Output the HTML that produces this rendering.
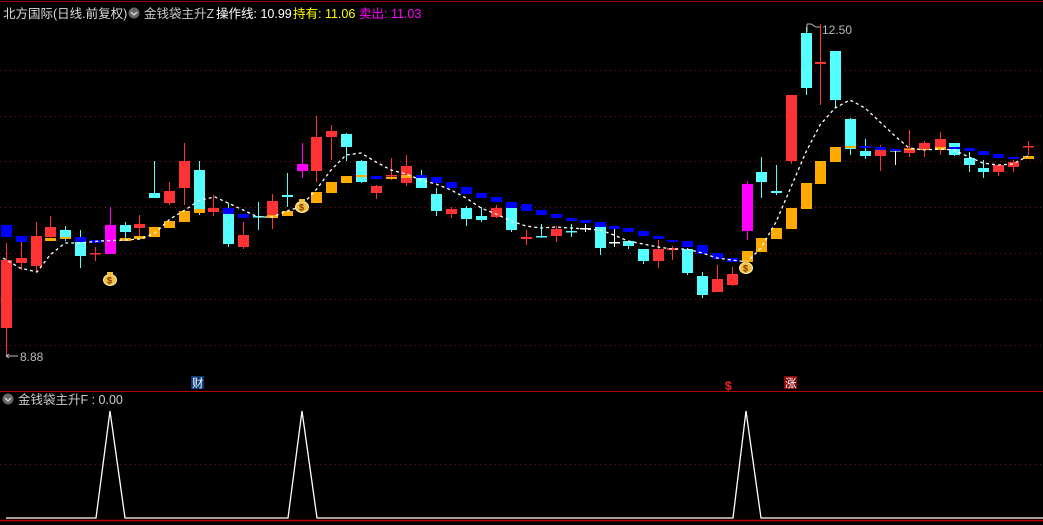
<!DOCTYPE html>
<html><head><meta charset="utf-8"><style>
html,body{margin:0;padding:0;background:#000;width:1043px;height:525px;overflow:hidden}
svg{display:block}
text{font-family:"Liberation Sans","Noto Sans CJK SC",sans-serif}
</style></head><body>
<svg id="s" width="1043" height="525" viewBox="0 0 1043 525" xmlns="http://www.w3.org/2000/svg">
<rect width="1043" height="525" fill="#000"/>
<line x1="0" y1="1.5" x2="1043" y2="1.5" stroke="#a00000" stroke-width="1"/>
<g id="grid" stroke="#8a1010" stroke-width="1" stroke-dasharray="1,4">
<line x1="0" y1="70.5" x2="1043" y2="70.5"/><line x1="0" y1="116.5" x2="1043" y2="116.5"/>
<line x1="0" y1="161.5" x2="1043" y2="161.5"/><line x1="0" y1="207.5" x2="1043" y2="207.5"/>
<line x1="0" y1="253.5" x2="1043" y2="253.5"/><line x1="0" y1="299.5" x2="1043" y2="299.5"/>
<line x1="0" y1="345.5" x2="1043" y2="345.5"/><line x1="0" y1="464.5" x2="1043" y2="464.5"/>
</g>
<g id="c"></g>
<polyline id="ma" fill="none" stroke="#fff" stroke-width="1.3" stroke-dasharray="3,3"/>
<g id="bags"></g>
<text x="3" y="18" font-size="12.5" fill="#ddd">北方国际(日线.前复权)</text>
<circle cx="134" cy="13" r="5.5" fill="#666"/><path d="M131 12l3 3 3-3" stroke="#ddd" stroke-width="1.3" fill="none"/>
<text x="144" y="18" font-size="12.5" fill="#ccc">金钱袋主升Z</text>
<text x="216" y="18" font-size="12.5" fill="#fff">操作线: 10.99</text>
<text x="293" y="18" font-size="12.5" fill="#ffff00">持有: 11.06</text>
<text x="359" y="18" font-size="12.5" fill="#ff00ff">卖出: 11.03</text>
<text x="822" y="34" font-size="12" fill="#bbb">12.50</text>
<path d="M807 24v8M807 24h4l5 3h4" stroke="#bbb" fill="none"/>
<path d="M6 356h12M6 356l3-2M6 356l3 2" stroke="#bbb" fill="none"/>
<text x="20" y="361" font-size="12" fill="#bbb">8.88</text>
<rect x="191" y="376" width="13" height="13" fill="#0a3a7a"/>
<text x="192" y="387" font-size="11.5" fill="#fff">财</text>
<text x="725" y="390" font-size="12" fill="#ff2020" font-weight="bold">$</text>
<rect x="784" y="376" width="13" height="13" fill="#8a0a0a"/>
<text x="785" y="387" font-size="11.5" fill="#fff">涨</text>
<line x1="0" y1="391.5" x2="1043" y2="391.5" stroke="#b00000"/>
<circle cx="8" cy="399" r="5.5" fill="#666"/><path d="M5 398l3 3 3-3" stroke="#ddd" stroke-width="1.3" fill="none"/>
<text x="18" y="404" font-size="12.5" fill="#ccc">金钱袋主升F : 0.00</text>
<polyline points="6,518 96,518 110,411 125,518 288,518 302,411 317,518 733,518 746,411 761,518 1043,518" fill="none" stroke="#fff" stroke-width="1.3"/>
<line x1="0" y1="520.5" x2="1043" y2="520.5" stroke="#c00000" stroke-width="1.5"/>
</svg>
<script>
var C={r:"#ff3333",c:"#55ffff",m:"#ff00ff",w:"#ffffff",b:"#0000ff",o:"#ffaa00"};
// [x, color, bodyTop, bodyBot, wickTop, wickBot, band(color,top,bot) ...]
var d=[
[6,"r",260,328,243,356,"b",225,237],
[21,"r",258,263,242,270,"b",236,242],
[36,"r",236,266,222,272],
[50,"r",227,237,216,238,"o",238,241],
[65,"c",230,238,226,241,"o",237,239],
[80,"c",238,256,230,268,"b",237,242],
[95,"r",253,254,247,261,"b",240,243],
[110,"m",225,254,207,254],
[125,"c",225,232,222,241,"o",238,241],
[139,"r",224,228,215,236,"o",236,239],
[154,"c",193,198,161,198,"o",227,237],
[169,"r",191,203,182,205,"o",221,228],
[184,"r",161,188,143,205,"o",211,222],
[199,"c",170,213,161,215,"o",209,213],
[213,"r",208,212,195,216],
[228,"c",214,244,203,247,"b",208,214],
[243,"r",235,247,222,249,"b",214,218],
[258,"c",216,217,202,230],
[272,"r",201,216,194,229,"o",215,218],
[287,"c",195,197,173,207,"o",211,216],
[302,"m",164,171,143,178],
[316,"r",137,171,116,182,"o",192,203],
[331,"r",131,137,125,160,"o",182,193],
[346,"c",134,147,133,161,"o",176,183],
[361,"c",161,182,160,183,"o",175,177],
[376,"r",186,193,185,199,"b",176,179],
[391,"r",175,176,158,180,"o",177,179],
[406,"r",166,183,155,186,"o",175,178],
[421,"c",178,188,170,188,"b",175,178],
[436,"c",194,211,188,216,"b",177,183],
[451,"r",209,214,207,218,"b",182,188],
[466,"c",208,219,206,226,"b",187,194],
[481,"c",216,220,207,222,"b",193,198],
[496,"r",208,217,205,218,"b",197,202],
[511,"c",208,230,208,232,"b",202,208],
[526,"r",237,239,230,245,"b",204,211],
[541,"c",236,237,224,238,"b",210,215],
[556,"r",229,236,226,242,"b",214,218],
[571,"c",231,232,224,237,"b",218,221],
[585,"w",228,229,224,232,"b",220,223],
[600,"c",227,248,227,255,"b",222,227],
[614,"w",242,243,229,247,"b",226,229],
[628,"c",241,246,241,249,"b",228,232],
[643,"c",249,261,249,264,"b",231,236],
[658,"r",249,261,240,268,"b",236,239],
[672,"r",248,250,246,260,"b",240,242],
[687,"c",249,273,248,275,"b",241,247],
[702,"c",276,295,272,298,"b",245,254],
[717,"r",279,292,265,292,"b",253,259],
[732,"r",274,285,267,286,"b",258,262],
[747,"m",184,231,181,240,"o",251,262],
[761,"c",172,182,157,198,"o",238,252],
[776,"c",191,193,165,195,"o",228,239],
[791,"r",95,161,95,164,"o",208,229],
[806,"c",33,88,27,95,"o",183,209],
[820,"r",62,64,24,105,"o",161,184],
[835,"c",51,100,51,108,"o",147,162],
[850,"c",119,149,118,155,"o",146,148],
[865,"c",151,156,139,159,"b",146,148],
[880,"r",148,156,145,171,"b",147,150],
[895,"w",150,151,149,165,"b",149,151],
[909,"r",148,153,130,157,"o",149,150],
[924,"r",143,149,141,157,"o",149,150],
[940,"r",139,149,132,155,"o",147,150],
[954,"c",143,155,143,156,"b",147,149],
[969,"c",158,165,152,172,"b",148,151],
[983,"c",168,172,160,178,"b",151,155],
[998,"r",165,172,165,176,"b",154,158],
[1013,"r",162,167,160,172,"b",157,159],
[1028,"r",146,147,141,155,"o",156,159]];
var h="";
d.forEach(function(a){var x=a[0],col=C[a[1]];
h+='<line x1="'+(x+.5)+'" y1="'+a[4]+'" x2="'+(x+.5)+'" y2="'+a[5]+'" stroke="'+col+'"/>';
h+='<rect x="'+(x-5)+'" y="'+a[2]+'" width="11" height="'+Math.max(1.5,a[3]-a[2])+'" fill="'+col+'"/>';
for(var i=6;i<a.length;i+=3)h+='<rect x="'+(x-5)+'" y="'+a[i+1]+'" width="11" height="'+(a[i+2]-a[i+1])+'" fill="'+C[a[i]]+'"/>';});
document.getElementById("c").innerHTML=h;
var ma=[[3,258],[20,268],[37,272],[50,255],[65,243],[80,243],[100,241],[125,240],[140,239],[155,233],[170,219],[185,210],[200,200],[215,197],[228,203],[243,210],[258,217],[272,217],[287,211],[300,207],[316,190],[331,170],[346,155],[361,153],[376,162],[391,170],[406,174],[421,180],[436,184],[451,190],[466,198],[481,208],[496,214],[511,221],[526,226],[541,228],[556,227],[571,228],[585,229],[600,230],[614,235],[628,241],[643,244],[658,247],[672,249],[687,249],[702,253],[717,258],[732,260],[747,262],[761,248],[776,222],[791,187],[806,152],[820,125],[835,108],[850,100],[865,108],[880,122],[895,136],[909,148],[924,150],[940,149],[954,150],[969,157],[983,163],[998,165],[1013,164],[1028,156]];
document.getElementById("ma").setAttribute("points",ma.map(function(p){return p.join(",")}).join(" "));
var b="";[[110,279],[302,206],[746,267]].forEach(function(p){
b+='<ellipse cx="'+p[0]+'" cy="'+(p[1]+1)+'" rx="6.5" ry="5.5" fill="#f0c040" stroke="#fff3b0"/><rect x="'+(p[0]-3)+'" y="'+(p[1]-7)+'" width="6" height="3" fill="#f0c040"/><text x="'+(p[0]-3)+'" y="'+(p[1]+4.5)+'" font-size="9" fill="#8a3000" font-weight="bold">$</text>';});
document.getElementById("bags").innerHTML=b;
</script>
</body></html>
